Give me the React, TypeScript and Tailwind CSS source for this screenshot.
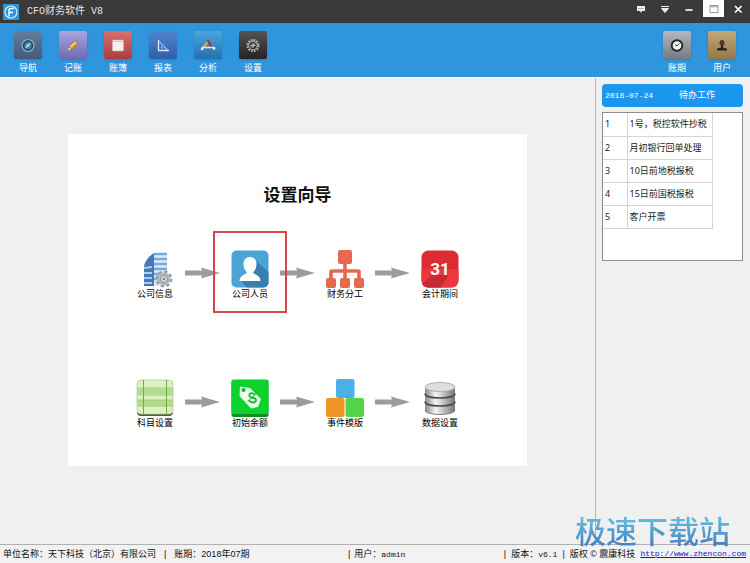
import React from 'react';

interface Tool {
  label: string;
  tile: string;
  icon: React.ReactNode;
}

interface Step {
  label: string;
  icon: React.ReactNode;
  active?: boolean;
}

const tools: Tool[] = [
  {
    label: '导航',
    tile: 'from-[#61809c] to-[#44597a]',
    icon: (
      <>
        <circle cx="14" cy="14.500" r="6" fill="#23506f" stroke="#8fb0c8" strokeWidth="1.2" />
        <circle cx="14" cy="14.500" r="3.600" fill="#3f7fa6" />
        <path d="M17 11.500 L15 15.500 L11 17.500 L13 13.500Z" fill="#b5d3e4" />
      </>
    ),
  },
  {
    label: '记账',
    tile: 'from-[#a9a5e0] to-[#6f6bb4]',
    icon: (
      <>
        <path d="M9 19.500 L10.500 15 L16 10 Q19 9 19 12 L14 17.500Z" fill="#e3a32c" stroke="#8a6424" strokeWidth=".6" />
        <path d="M11.500 15.500 L17 11" stroke="#f9dc84" strokeWidth="1.4" />
        <path d="M9 19.500 L10 16.800 L11.500 18.500Z" fill="#fff3d6" />
      </>
    ),
  },
  {
    label: '账簿',
    tile: 'from-[#d8706d] to-[#a93d40]',
    icon: (
      <>
        <rect x="8.500" y="9" width="11" height="11" rx="1" fill="#f7eded" stroke="#d9b4b2" strokeWidth=".6" />
        <path d="M9 10.500h10" stroke="#d8c3c3" strokeWidth="1" />
      </>
    ),
  },
  {
    label: '报表',
    tile: 'from-[#4f86d0] to-[#2f5fa8]',
    icon: (
      <>
        <path d="M9.500 9v10.500H20" fill="none" stroke="#dbe8fa" strokeWidth="1.300" />
        <path d="M10 10.500 L18.500 19" fill="none" stroke="#dbe8fa" strokeWidth="1" />
        <path d="M12.500 15v2M12.500 17h2" stroke="#b8cdec" strokeWidth=".8" />
      </>
    ),
  },
  {
    label: '分析',
    tile: 'from-[#4aa6de] to-[#2470b4]',
    icon: (
      <>
        <path d="M8 18.500 L14.500 9.500" stroke="#e6b24a" strokeWidth="2" />
        <path d="M13.500 9 L19 18.500" stroke="#9b3540" strokeWidth="2.200" />
        <path d="M7.500 16.500h13" stroke="#f1e3c4" strokeWidth="1.600" />
        <circle cx="8" cy="18" r="1.300" fill="#e8eef3" />
        <circle cx="20" cy="17.500" r="1.400" fill="#e8eef3" />
      </>
    ),
  },
  {
    label: '设置',
    tile: 'from-[#555555] to-[#242424]',
    icon: (
      <>
        <circle cx="14" cy="14.500" r="5.600" fill="none" stroke="#b9b9b9" strokeWidth="1.800" strokeDasharray="1.700 1.230" />
        <circle cx="14" cy="14.500" r="4.300" fill="none" stroke="#c6c6c6" strokeWidth=".9" />
        <path d="M11.500 14.500h5M14 12v5M12 16.500l4-4" stroke="#cfcfcf" strokeWidth=".9" />
      </>
    ),
  },
];

const accountTools: Tool[] = [
  {
    label: '账期',
    tile: 'from-[#b4b7bf] to-[#767b88]',
    icon: (
      <>
        <circle cx="14" cy="14.500" r="5.300" fill="#f6f6f6" stroke="#262626" strokeWidth="1.900" />
        <path d="M12 13.500 L14 15 L16.500 12.500" fill="none" stroke="#333333" strokeWidth="1" />
      </>
    ),
  },
  {
    label: '用户',
    tile: 'from-[#c4a878] to-[#94774a]',
    icon: (
      <>
        <ellipse cx="14" cy="12" rx="2.500" ry="3" fill="#4b3a28" />
        <path d="M13 14h2v2.500l4 1.200v1.800H9v-1.800l4-1.200Z" fill="#2c2118" />
      </>
    ),
  },
];

const setupSteps: Step[] = [
  {
    label: '公司信息',
    icon: (
      <>
        <path d="M8 16 Q10 8 18 3 V36 H8Z" fill="#4678b8" />
        <path d="M18 3h13v33H18Z" fill="#dcebf8" />
        <path d="M18 4h13M18 9h13M18 14h13M18 19h13M18 24h13M18 29h13" stroke="#78a9dc" strokeWidth="2.400" />
        <path d="M8 18l8-1M8 23h8M8 28h8M8 33h8" stroke="#a9cbed" strokeWidth="1.800" />
        <circle cx="28" cy="29" r="7" fill="none" stroke="#989ca0" strokeWidth="3" strokeDasharray="3 2.500" />
        <circle cx="28" cy="29" r="6.500" fill="#b5b8ba" />
        <circle cx="28" cy="29" r="3.500" fill="#dddddd" stroke="#8b8e91" />
        <circle cx="28" cy="29" r="1.300" fill="#7c7f82" />
      </>
    ),
  },
  {
    label: '公司人员',
    active: true,
    icon: (
      <>
        <rect width="37" height="37" x=".5" y=".5" rx="5" fill="#4ba3d6" />
        <path d="M24 10 L37.500 22 V32.500 a5 5 0 0 1-5 5 H16 L10 31Z" fill="#397fae" />
        <path d="M19 7c4.300 0 6.500 3 6.500 7s-1.800 7-3.500 8.500c1 2 7.500 2.500 7.500 8.500h-21c0-6 6.500-6.500 7.500-8.500-1.700-1.500-3.500-4.500-3.500-8.500s2.200-7 6.500-7Z" fill="#ffffff" />
      </>
    ),
  },
  {
    label: '财务分工',
    icon: (
      <>
        <rect x="12" y="0" width="14" height="14" rx="2" fill="#e4694e" />
        <path d="M19 13v17M5 30v-8q0-1 1-1h26q1 0 1 1v8" fill="none" stroke="#e4694e" strokeWidth="3.600" />
        <rect x="0" y="28" width="10" height="10" rx="2" fill="#e4694e" />
        <rect x="14" y="28" width="10" height="10" rx="2" fill="#e4694e" />
        <rect x="28" y="28" width="10" height="10" rx="2" fill="#e4694e" />
      </>
    ),
  },
  {
    label: '会计期间',
    icon: (
      <>
        <rect x=".5" y=".5" width="37" height="37" rx="7" fill="#dd2b32" />
        <path d="M.5 19h37v11.500a7 7 0 0 1-7 7h-23a7 7 0 0 1-7-7Z" fill="#f0363d" />
        <path d="M11 25 L1 34 Q3 37.500 7.500 37.500 H20 L28 25Z" fill="#c92a31" />
        <text x="19" y="25" textAnchor="middle" fontFamily="Roboto, sans-serif" fontWeight="700" fontSize="17" fill="#ffffff">
          31
        </text>
      </>
    ),
  },
];

const dataSteps: Step[] = [
  {
    label: '科目设置',
    icon: (
      <>
        <rect x="1" y="2" width="36" height="35" rx="4" fill="#4f5a48" />
        <rect x="1" y="1" width="36" height="34" rx="4" fill="#dcf0c0" stroke="#b8cf9a" strokeWidth=".8" />
        <path d="M1 12.500h36M1 24h36" stroke="#b4dc8c" strokeWidth="6" />
        <path d="M1 9h36M1 16h36M1 21h36M1 27h36" stroke="#93c26e" strokeWidth=".7" />
        <path d="M7.500 1v34M30.500 1v34" stroke="#72a850" strokeWidth="1" />
      </>
    ),
  },
  {
    label: '初始余额',
    icon: (
      <>
        <rect x=".5" y="1" width="37" height="37" rx="2" fill="#0c8f23" />
        <rect x=".5" y=".5" width="37" height="34.500" rx="2" fill="#0bd32c" />
        <path d="M9 7.500 L19 9 L30 20 L27 28 L20 29.500 L8.500 17Z" fill="#eafbe8" />
        <circle cx="12.500" cy="11" r="2" fill="#0bb828" />
        <path d="M23.500 15.500c-2.500-2.500-6-1-5 1.500s6.500 1 6.500 4-4.500 3.500-7 .5" fill="none" stroke="#12b52f" strokeWidth="1.800" />
        <path d="M16.500 22.500L25.500 14.500" stroke="#12b52f" strokeWidth="1" />
      </>
    ),
  },
  {
    label: '事件模版',
    icon: (
      <>
        <rect x="10" y="0" width="18.500" height="19" rx="2" fill="#47b1e8" />
        <rect x="0" y="19" width="18.500" height="19" rx="2" fill="#ee9524" />
        <rect x="19.500" y="19" width="18.500" height="19" rx="2" fill="#53d446" />
      </>
    ),
  },
  {
    label: '数据设置',
    icon: (
      <>
        <defs>
          <linearGradient id="metal">
            <stop offset="0" stopColor="#858585" />
            <stop offset=".35" stopColor="#f5f5f5" />
            <stop offset=".6" stopColor="#c4c4c4" />
            <stop offset="1" stopColor="#777777" />
          </linearGradient>
        </defs>
        <path d="M4 8v23c0 6 30 6 30 0V8Z" fill="url(#metal)" />
        <path d="M4 14.500c0 6 30 6 30 0M4 22.500c0 6 30 6 30 0" fill="none" stroke="#4c4c4c" strokeWidth="1.600" />
        <path d="M4 31c0 6 30 6 30 0" fill="none" stroke="#858585" strokeWidth="1" />
        <ellipse cx="19" cy="8" rx="15" ry="4.500" fill="#dedede" stroke="#a2a2a2" strokeWidth=".8" />
      </>
    ),
  },
];

const todos = ['1号，税控软件抄税', '月初银行回单处理', '10日前地税报税', '15日前国税报税', '客户开票'];

const ToolButton: React.FC<{ tool: Tool }> = ({ tool }) => (
  <button className="flex w-7 flex-col items-center gap-1 text-[9px] leading-[10px] text-white">
    <span className={`h-7 w-7 rounded-xs bg-linear-to-b shadow ${tool.tile}`}>
      <svg viewBox="0 0 28 28" className="h-7 w-7">{tool.icon}</svg>
    </span>
    {tool.label}
  </button>
);

const Arrow = () => (
  <svg viewBox="0 0 35 12" className="mt-[17px] h-3 w-[35px] shrink-0">
    <path d="M0 3.500 H17 L16 .5 L35 6 L16 11.500 L17 8.500 H0Z" fill="#9c9c9c" />
  </svg>
);

const StepRow: React.FC<{ steps: Step[] }> = ({ steps }) => (
  <div className="flex items-start justify-center gap-[11px]">
    {steps.map((step, i) => (
      <React.Fragment key={step.label}>
        {i > 0 && <Arrow />}
        <button className="relative flex w-[38px] shrink-0 flex-col items-center gap-px text-[9px] leading-[10px] whitespace-nowrap text-black">
          <svg viewBox="0 0 38 38" className="h-[38px] w-[38px]">{step.icon}</svg>
          {step.label}
          {step.active && <span className="absolute -inset-x-[18px] -top-[19px] -bottom-3.5 border-2 border-[#d8444a]" />}
        </button>
      </React.Fragment>
    ))}
  </div>
);

const TitleBar = () => (
  <header className="flex h-[23px] shrink-0 items-center bg-[#3a3a3a] pl-[3px] text-white">
    <svg viewBox="0 0 16 16" className="h-4 w-4">
      <rect width="16" height="16" fill="#2b94dc" />
      <circle cx="8" cy="8" r="6" fill="none" stroke="#d9effc" strokeWidth="1.200" />
      <path d="M6 12.500V6q0-1.500 1.500-1.500H11M6 8.500h4" fill="none" stroke="#ffffff" strokeWidth="1.400" />
    </svg>
    <h1 className="ml-2 font-['Liberation_Mono','Noto_Sans_CJK_SC',monospace] text-[10px] leading-3 text-[#e6e6e6]">CFO财务软件 V8</h1>
    <div className="ml-auto flex h-full items-start">
      <button aria-label="消息" className="flex h-[18px] w-6 items-center justify-center">
        <svg viewBox="0 0 10 10" className="h-2.5 w-2.5">
          <path d="M1 2h8v5H6L5 9 4 7H1Z" fill="#eeeeee" />
          <path d="M2.500 4.500h5" stroke="#777777" strokeDasharray="1 1" />
        </svg>
      </button>
      <button aria-label="菜单" className="flex h-[18px] w-6 items-center justify-center">
        <svg viewBox="0 0 10 10" className="h-2.5 w-2.5">
          <path d="M1 2.500h8M1.500 4.500h7L5 8.500Z" fill="#eeeeee" stroke="#eeeeee" strokeWidth="1" />
        </svg>
      </button>
      <button aria-label="最小化" className="flex h-[18px] w-6 items-center justify-center">
        <svg viewBox="0 0 10 10" className="h-2.5 w-2.5">
          <path d="M1.500 6h7" stroke="#ffffff" strokeWidth="1.600" />
        </svg>
      </button>
      <button aria-label="最大化" className="mx-0.5 flex h-[17px] w-[21px] items-center justify-center bg-white">
        <svg viewBox="0 0 10 10" className="h-2.5 w-2.5">
          <path d="M1 1.500h8v7H1ZM1 2.800h8" fill="none" stroke="#999999" />
        </svg>
      </button>
      <button aria-label="关闭" className="flex h-[18px] w-6 items-center justify-center">
        <svg viewBox="0 0 10 10" className="h-2.5 w-2.5">
          <path d="M2 2l6.500 6.500M8.500 2L2 8.500" stroke="#ffffff" strokeWidth="1.700" />
        </svg>
      </button>
    </div>
  </header>
);

const TodoPanel = () => (
  <aside className="flex w-[155px] shrink-0 flex-col gap-[5px] border-l border-[#b4b4b4] py-1.5 pr-[7px] pl-1.5">
    <h2 className="flex h-[23px] items-center rounded bg-[#1b97ef] pl-[3px] text-[9px] text-white">
      <time className="font-['Liberation_Mono','Noto_Sans_CJK_SC',monospace] text-[8px]">2018-07-24</time>
      <span className="ml-[26px]">待办工作</span>
    </h2>
    <div className="h-[149px] border border-[#8e8e8e] bg-white">
      <table className="border-collapse font-['Noto_Sans','Noto_Sans_CJK_SC',sans-serif] text-[9px] leading-[10px] text-[#1a1a1a]">
        <tbody>
          {todos.map((todo, i) => (
            <tr key={todo} className="h-[23px]">
              <td className="w-6 border-r border-b border-[#d4d4d4] pl-0.5">{i + 1}</td>
              <td className="w-[85px] border-r border-b border-[#d4d4d4] pl-0.5 whitespace-nowrap">{todo}</td>
            </tr>
          ))}
        </tbody>
      </table>
    </div>
  </aside>
);

const StatusBar = () => (
  <footer className="flex h-[19px] shrink-0 items-center border-t border-[#b0b0b0] bg-[#f2f2f2] pr-1 pl-[3px] text-[9px] leading-[10px] whitespace-nowrap text-[#111111]">
    <div className="flex flex-[343] gap-2">
      <span>单位名称：天下科技（北京）有限公司</span>
      <span>|</span>
      <span>账期：2018年07期</span>
    </div>
    <div className="flex flex-[155] gap-1">
      <span>|</span>
      <span>
        用户：<span className="font-['Liberation_Mono',monospace] text-[8px]">admin</span>
      </span>
    </div>
    <div className="flex gap-[5px]">
      <span>|</span>
      <span>
        版本：<span className="font-['Liberation_Mono',monospace] text-[8px]">v6.1</span>
      </span>
      <span>|</span>
      <span>版权 © 震康科技</span>
      <a href="http://www.zhencon.com" className="font-['Liberation_Mono',monospace] text-[8px] text-[#1515c8] underline">
        http://www.zhencon.com
      </a>
    </div>
  </footer>
);

const App: React.FC = () => {
  return (
    <div className="relative flex h-screen flex-col bg-[#f0f0f0] font-['Liberation_Sans','Noto_Sans_CJK_SC',sans-serif]">
      <TitleBar />
      <nav className="flex h-[54px] shrink-0 justify-between bg-[#2f96de] px-3.5 pt-2">
        <div className="flex gap-[17px]">
          {tools.map((tool) => <ToolButton key={tool.label} tool={tool} />)}
        </div>
        <div className="flex gap-[17px]">
          {accountTools.map((tool) => <ToolButton key={tool.label} tool={tool} />)}
        </div>
      </nav>
      <div className="flex min-h-0 flex-1 border-t border-white">
        <main className="flex-1 px-[68px] pt-14">
          <section className="bg-white pt-[51px] pb-[38px]">
            <h2 className="mb-11 text-center text-[17px] leading-[21px] font-bold text-[#111111]">设置向导</h2>
            <div className="flex flex-col gap-20">
              <StepRow steps={setupSteps} />
              <StepRow steps={dataSteps} />
            </div>
          </section>
        </main>
        <TodoPanel />
      </div>
      <StatusBar />
      <div className="pointer-events-none absolute right-5 bottom-3 bg-linear-to-b from-[#62c4e4] to-[#4673b8] bg-clip-text text-[31px] leading-9 font-medium text-transparent">
        极速下载站
      </div>
    </div>
  );
};

export default App;
